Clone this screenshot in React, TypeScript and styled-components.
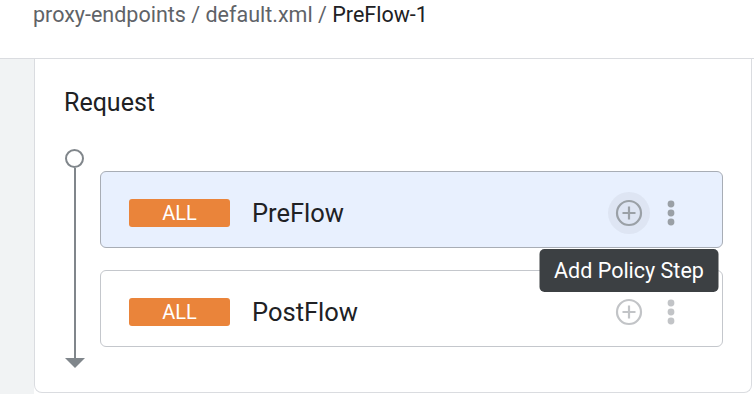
import React from "react";
import styled, { createGlobalStyle } from "styled-components";

const Global = createGlobalStyle`
  html, body { margin: 0; padding: 0; background: #ffffff; }
  body { font-family: Roboto, "Noto Sans", Arial, sans-serif; -webkit-font-smoothing: antialiased; }
  * { box-sizing: border-box; }
`;

const Page = styled.div`
  width: 754px;
  height: 394px;
  overflow: hidden;
  display: flex;
  flex-direction: column;
`;

const Header = styled.div`
  height: 59px;
  padding: 2px 0 0 33px;
  border-bottom: 1px solid #dadce0;
  font-size: 21.5px;
  line-height: 26px;
  color: #5f6368;
`;

const Current = styled.span`
  color: #202124;
`;

const Body = styled.div`
  display: flex;
  flex: 1;
`;

const Rail = styled.div`
  width: 34px;
  background: #f1f3f4;
`;

const Panel = styled.div`
  width: 718px;
  height: 334px;
  border: 1px solid #dadce0;
  border-top: none;
  border-radius: 0 0 8px 8px;
  padding: 30px 28px 0 29px;
`;

const Title = styled.div`
  font-size: 25px;
  line-height: 28px;
  color: #202124;
`;

const Flow = styled.div`
  display: flex;
  margin-top: 32px;
`;

const Timeline = styled.div`
  width: 21px;
  display: flex;
  flex-direction: column;
  align-items: center;
`;

const Node = styled.div`
  width: 19px;
  height: 19px;
  border: 2px solid #80868b;
  border-radius: 50%;
`;

const Line = styled.div`
  width: 2px;
  flex: 1;
  background: #80868b;
`;

const Arrow = styled.div`
  width: 0;
  height: 0;
  border-left: 10.5px solid transparent;
  border-right: 10.5px solid transparent;
  border-top: 10px solid #80868b;
`;

const Cards = styled.div`
  flex: 1;
  margin-left: 15px;
  padding: 22px 0 21px;
  display: flex;
  flex-direction: column;
  gap: 22px;
`;

const Card = styled.div<{ $active?: boolean }>`
  position: relative;
  height: 77px;
  display: flex;
  align-items: center;
  padding: 6px 39px 0 28px;
  border: 1px solid ${(p) => (p.$active ? "#a8adb5" : "#c4c7cc")};
  border-radius: 6px;
  background: ${(p) => (p.$active ? "#e8f0fe" : "#ffffff")};
`;

const Badge = styled.div`
  width: 101px;
  height: 28px;
  border-radius: 3px;
  background: #ea843a;
  color: #ffffff;
  font-size: 20px;
  line-height: 28px;
  text-align: center;
`;

const Name = styled.div`
  margin-left: 22px;
  font-size: 25.5px;
  line-height: 28px;
  color: #202124;
  flex: 1;
`;

const IconSlot = styled.div`
  position: relative;
`;

const AddButton = styled.div<{ $hover?: boolean }>`
  width: 42px;
  height: 42px;
  border-radius: 50%;
  display: flex;
  align-items: center;
  justify-content: center;
  background: ${(p) => (p.$hover ? "rgba(60, 64, 67, 0.06)" : "transparent")};
`;

const MoreButton = styled.div`
  width: 24px;
  height: 42px;
  margin-left: 9px;
  display: flex;
  align-items: center;
  justify-content: center;
`;

const Tooltip = styled.div`
  position: absolute;
  top: 57px;
  left: 50%;
  transform: translateX(-50%);
  width: 179px;
  height: 43px;
  border-radius: 5px;
  background: #3c4043;
  color: #ffffff;
  font-size: 21.5px;
  line-height: 43px;
  text-align: center;
  white-space: nowrap;
  z-index: 2;
`;

const PlusIcon = ({ color }: { color: string }) => (
  <svg width="28" height="28" viewBox="0 0 28 28" fill="none">
    <circle cx="14" cy="14" r="12" stroke={color} strokeWidth="2.2" />
    <path d="M14 7.5v13M7.5 14h13" stroke={color} strokeWidth="2.2" />
  </svg>
);

const KebabIcon = ({ color }: { color: string }) => (
  <svg width="8" height="26" viewBox="0 0 8 26">
    <circle cx="4" cy="4" r="3.4" fill={color} />
    <circle cx="4" cy="13" r="3.4" fill={color} />
    <circle cx="4" cy="22" r="3.4" fill={color} />
  </svg>
);

type FlowItem = { name: string; active?: boolean; tooltip?: string };

const flows: FlowItem[] = [
  { name: "PreFlow", active: true, tooltip: "Add Policy Step" },
  { name: "PostFlow" },
];

export default function App() {
  return (
    <Page>
      <Global />
      <Header>
        proxy-endpoints / default.xml / <Current>PreFlow-1</Current>
      </Header>
      <Body>
        <Rail />
        <Panel>
          <Title>Request</Title>
          <Flow>
            <Timeline>
              <Node />
              <Line />
              <Arrow />
            </Timeline>
            <Cards>
              {flows.map((f) => {
                const c = f.active ? "#9aa0a6" : "#c2c4c7";
                return (
                  <Card key={f.name} $active={f.active}>
                    <Badge>ALL</Badge>
                    <Name>{f.name}</Name>
                    <IconSlot>
                      <AddButton $hover={!!f.tooltip}>
                        <PlusIcon color={c} />
                      </AddButton>
                      {f.tooltip && <Tooltip>{f.tooltip}</Tooltip>}
                    </IconSlot>
                    <MoreButton>
                      <KebabIcon color={c} />
                    </MoreButton>
                  </Card>
                );
              })}
            </Cards>
          </Flow>
        </Panel>
      </Body>
    </Page>
  );
}
